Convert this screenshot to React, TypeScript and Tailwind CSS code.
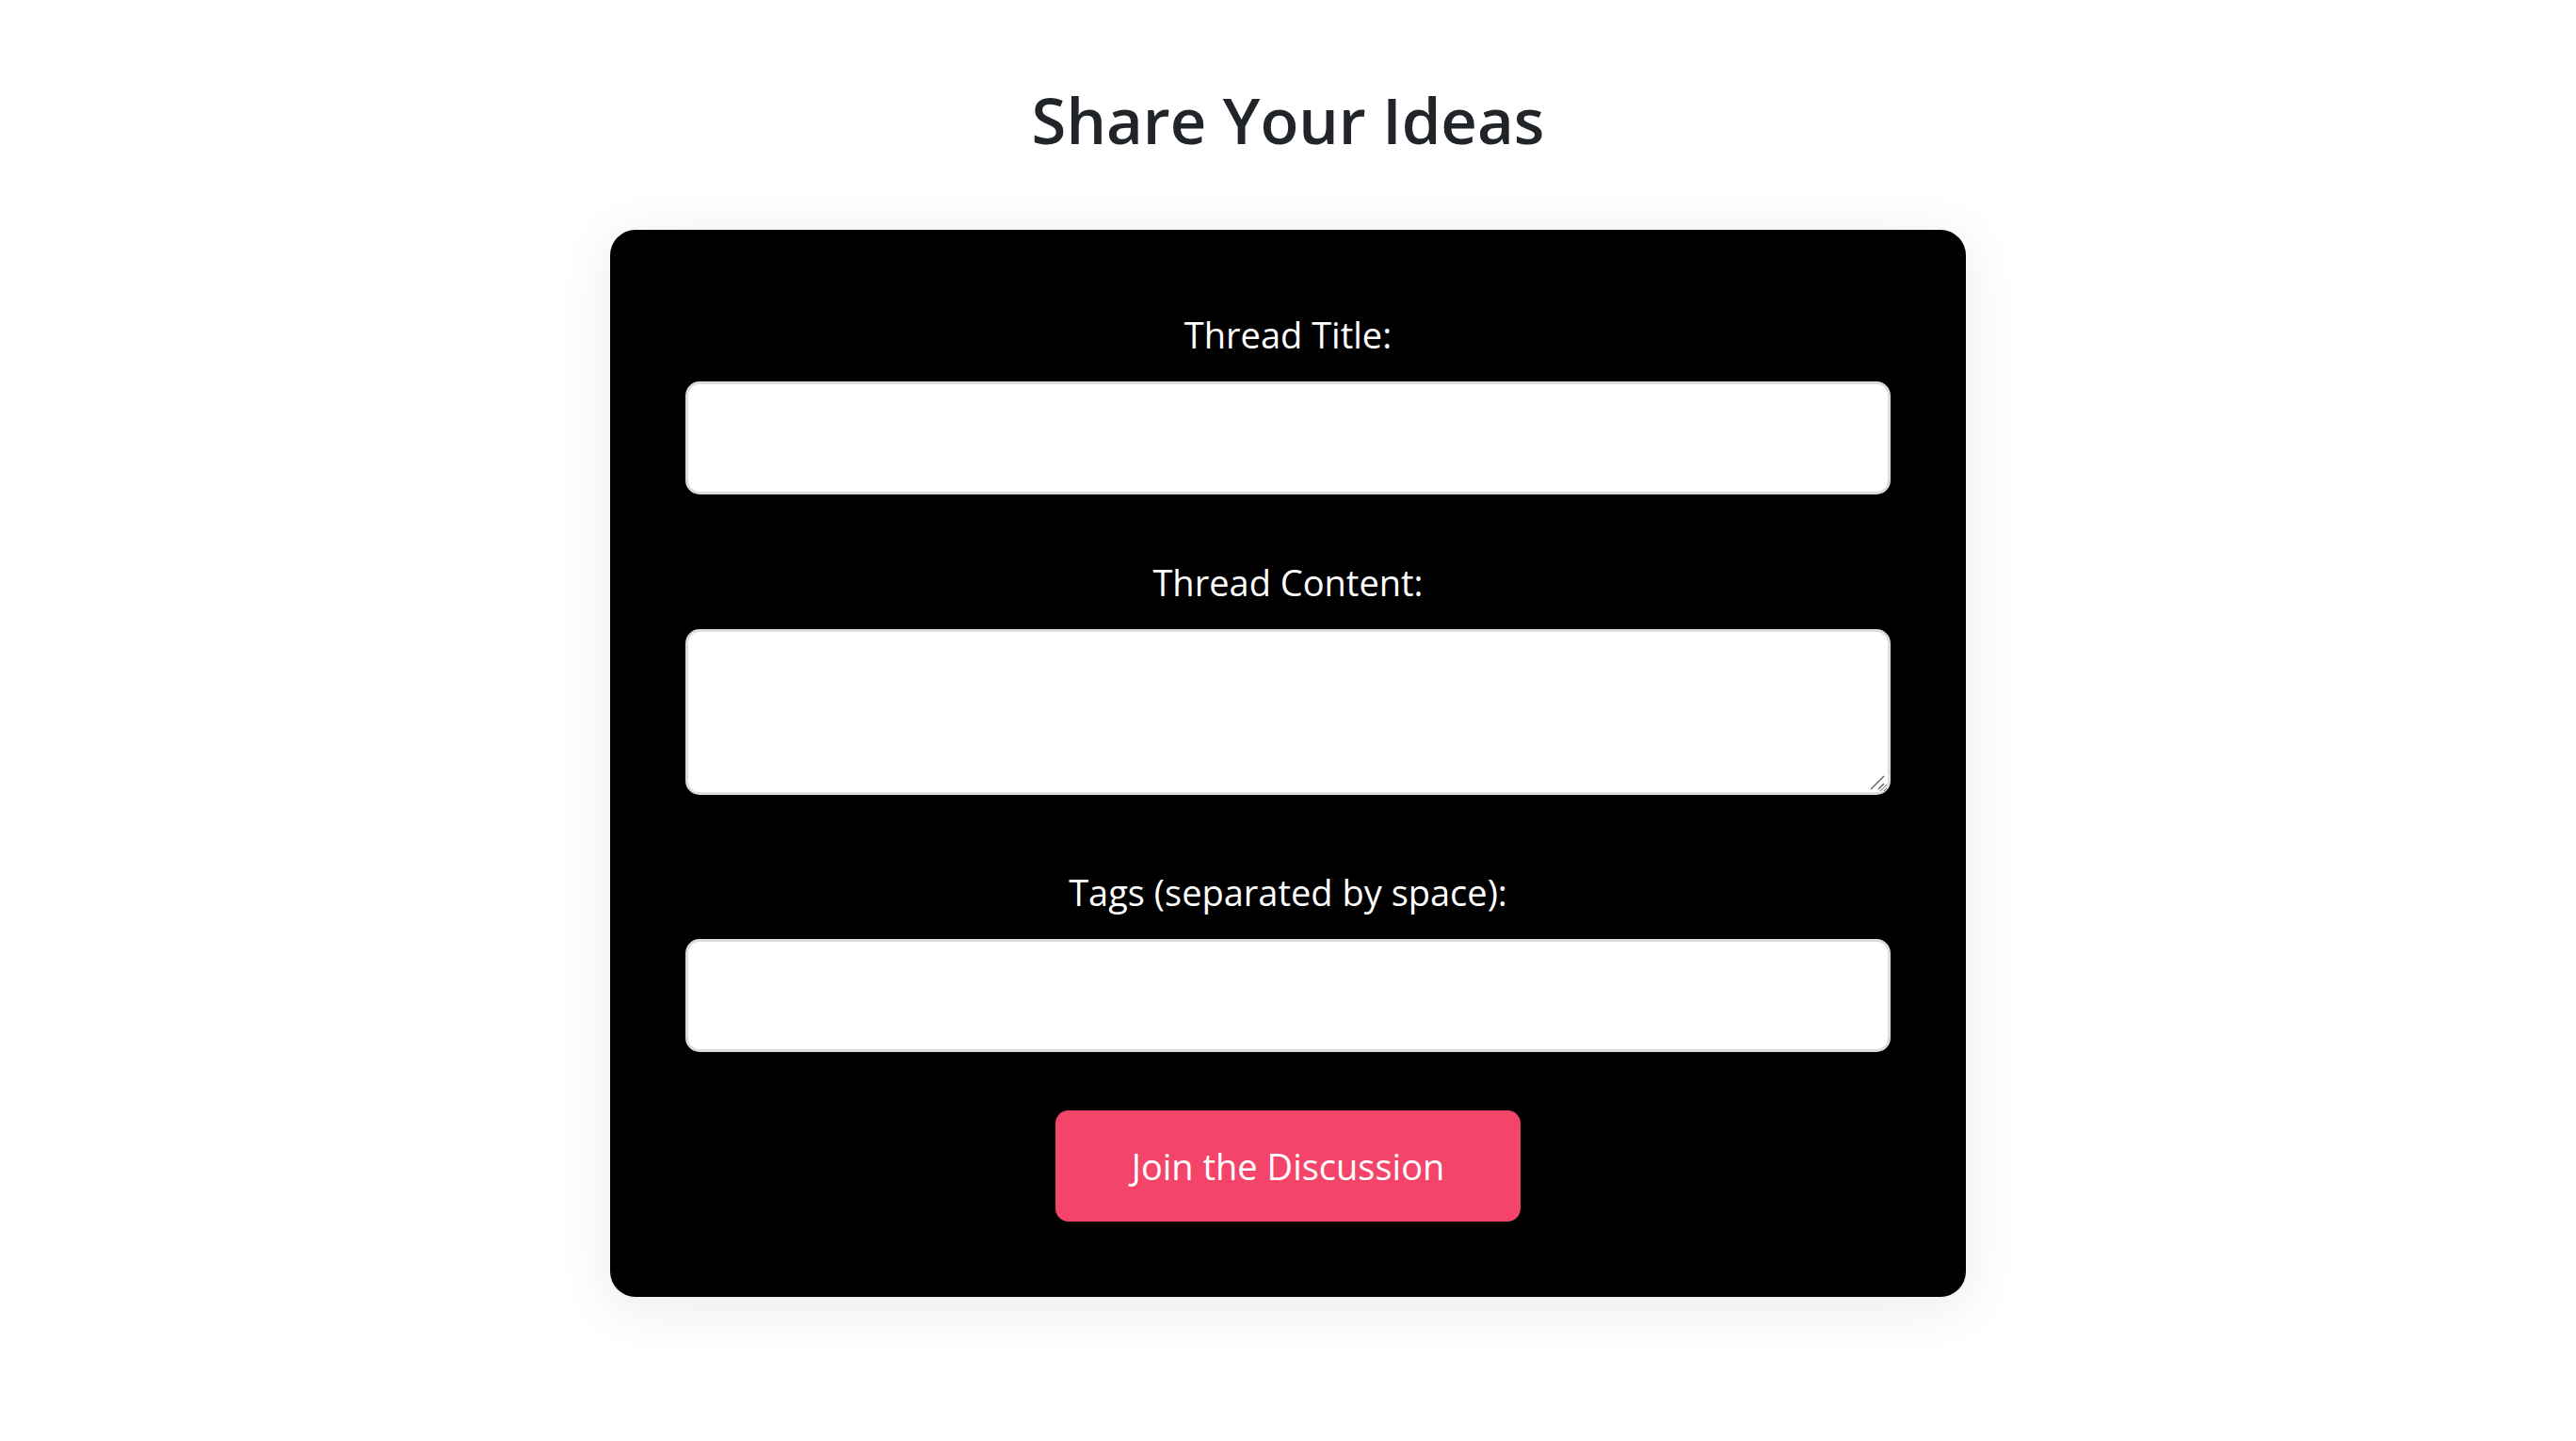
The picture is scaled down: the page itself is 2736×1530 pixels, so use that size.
import React from 'react';

const App: React.FC = () => {
  return (
    <div className="min-h-screen w-full bg-white flex flex-col items-center" style={{ fontFamily: '"Open Sans", "Noto Sans", sans-serif' }}>
      {/* Page heading */}
      <h1 className="mt-[86px] mb-[76px] text-[67px] leading-[82px] font-semibold text-[#212529]">Share Your Ideas</h1>

      {/* Form card */}
      <form
        className="w-[1440px] bg-black rounded-[27px] px-[80px] pt-[80px] pb-[80px] shadow-[0_10px_60px_rgba(0,0,0,0.09)]"
        onSubmit={(e) => e.preventDefault()}
      >
        <label htmlFor="title" className="block text-center text-white text-[38px] leading-[63px] mb-[18px]">Thread Title:</label>
        <input
          id="title"
          type="text"
          className="block w-full h-[120px] bg-white rounded-[15px] border-[3px] border-[#dddddd] px-6 text-[38px] outline-none mb-[62px]"
        />

        <label htmlFor="content" className="block text-center text-white text-[38px] leading-[63px] mb-[18px]">Thread Content:</label>
        <div className="relative mb-[72px]">
          <textarea
            id="content"
            className="block w-full h-[176px] bg-white rounded-[15px] border-[3px] border-[#dddddd] px-6 py-4 text-[38px] outline-none resize"
          />
          {/* resize grip */}
          <svg className="absolute right-[6px] bottom-[5px] w-[16px] h-[16px] pointer-events-none" viewBox="0 0 16 16">
            <path d="M1 15 L15 1" stroke="#6b6b6b" strokeWidth="1.6" />
            <path d="M9 15 L15 9" stroke="#6b6b6b" strokeWidth="1.6" />
          </svg>
        </div>

        <label htmlFor="tags" className="block text-center text-white text-[38px] leading-[63px] mb-[18px]">Tags (separated by space):</label>
        <input
          id="tags"
          type="text"
          className="block w-full h-[120px] bg-white rounded-[15px] border-[3px] border-[#dddddd] px-6 text-[38px] outline-none mb-[62px]"
        />

        <button
          type="submit"
          className="block mx-auto w-[494px] h-[118px] rounded-[14px] bg-[#f5446a] text-white text-[38px]"
        >
          Join the Discussion
        </button>
      </form>
    </div>
  );
};

export default App;
